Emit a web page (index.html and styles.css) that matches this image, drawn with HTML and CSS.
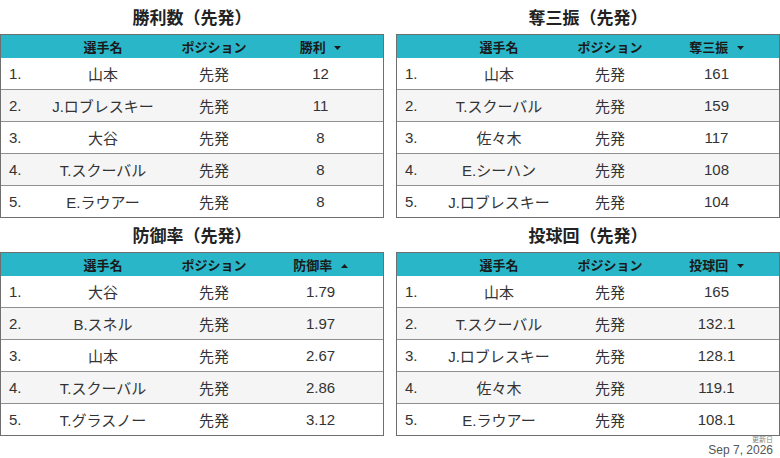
FILE: index.html
```html
<!DOCTYPE html>
<html lang="ja">
<head>
<meta charset="utf-8">
<link rel="stylesheet" href="styles.css">
</head>
<body>
<div class="page">
  <div class="grid">
    <section class="panel">
      <h2 class="title">勝利数（先発）</h2>
      <div class="tbl">
        <div class="row head"><span></span><span>選手名</span><span>ポジション</span><span>勝利 <svg class="sort" width="7" height="4" viewBox="0 0 7 4"><path d="M0 0h7L3.5 4z"/></svg></span></div>
        <div class="row"><span class="rank">1.</span><span>山本</span><span>先発</span><span>12</span></div>
        <div class="row alt"><span class="rank">2.</span><span>J.ロブレスキー</span><span>先発</span><span>11</span></div>
        <div class="row"><span class="rank">3.</span><span>大谷</span><span>先発</span><span>8</span></div>
        <div class="row alt"><span class="rank">4.</span><span>T.スクーバル</span><span>先発</span><span>8</span></div>
        <div class="row"><span class="rank">5.</span><span>E.ラウアー</span><span>先発</span><span>8</span></div>
      </div>
    </section>
    <section class="panel">
      <h2 class="title">奪三振（先発）</h2>
      <div class="tbl">
        <div class="row head"><span></span><span>選手名</span><span>ポジション</span><span>奪三振 <svg class="sort" width="7" height="4" viewBox="0 0 7 4"><path d="M0 0h7L3.5 4z"/></svg></span></div>
        <div class="row"><span class="rank">1.</span><span>山本</span><span>先発</span><span>161</span></div>
        <div class="row alt"><span class="rank">2.</span><span>T.スクーバル</span><span>先発</span><span>159</span></div>
        <div class="row"><span class="rank">3.</span><span>佐々木</span><span>先発</span><span>117</span></div>
        <div class="row alt"><span class="rank">4.</span><span>E.シーハン</span><span>先発</span><span>108</span></div>
        <div class="row"><span class="rank">5.</span><span>J.ロブレスキー</span><span>先発</span><span>104</span></div>
      </div>
    </section>
    <section class="panel">
      <h2 class="title">防御率（先発）</h2>
      <div class="tbl">
        <div class="row head"><span></span><span>選手名</span><span>ポジション</span><span>防御率 <svg class="sort" width="7" height="4" viewBox="0 0 7 4"><path d="M0 4h7L3.5 0z"/></svg></span></div>
        <div class="row"><span class="rank">1.</span><span>大谷</span><span>先発</span><span>1.79</span></div>
        <div class="row alt"><span class="rank">2.</span><span>B.スネル</span><span>先発</span><span>1.97</span></div>
        <div class="row"><span class="rank">3.</span><span>山本</span><span>先発</span><span>2.67</span></div>
        <div class="row alt"><span class="rank">4.</span><span>T.スクーバル</span><span>先発</span><span>2.86</span></div>
        <div class="row"><span class="rank">5.</span><span>T.グラスノー</span><span>先発</span><span>3.12</span></div>
      </div>
    </section>
    <section class="panel">
      <h2 class="title">投球回（先発）</h2>
      <div class="tbl">
        <div class="row head"><span></span><span>選手名</span><span>ポジション</span><span>投球回 <svg class="sort" width="7" height="4" viewBox="0 0 7 4"><path d="M0 0h7L3.5 4z"/></svg></span></div>
        <div class="row"><span class="rank">1.</span><span>山本</span><span>先発</span><span>165</span></div>
        <div class="row alt"><span class="rank">2.</span><span>T.スクーバル</span><span>先発</span><span>132.1</span></div>
        <div class="row"><span class="rank">3.</span><span>J.ロブレスキー</span><span>先発</span><span>128.1</span></div>
        <div class="row alt"><span class="rank">4.</span><span>佐々木</span><span>先発</span><span>119.1</span></div>
        <div class="row"><span class="rank">5.</span><span>E.ラウアー</span><span>先発</span><span>108.1</span></div>
      </div>
    </section>
  </div>
  <footer class="updated">
    <div class="updated-label">更新日</div>
    <div class="updated-date">Sep 7, 2026</div>
  </footer>
</div>
</body>
</html>
```
FILE: styles.css
```css
html, body {
  margin: 0;
  padding: 0;
  background: #ffffff;
}
body {
  font-family: "Liberation Sans", Arial, "Noto Sans CJK JP", sans-serif;
  color: #333333;
}
.page {
  width: 780px;
  height: 458px;
  overflow: hidden;
}
.grid {
  display: grid;
  grid-template-columns: 384px 384px;
  column-gap: 12px;
}
.panel {
  display: flex;
  flex-direction: column;
}
.title {
  margin: 0;
  height: 34px;
  line-height: 33px;
  text-align: center;
  font-size: 17px;
  font-weight: bold;
  color: #222222;
  font-family: "Noto Sans CJK JP", sans-serif;
}
.tbl {
  border: 1px solid #6f6f6f;
}
.row {
  display: grid;
  grid-template-columns: 35px 134px 88px 1fr;
  height: 31px;
  align-items: center;
  font-size: 15px;
  border-bottom: 1px solid #8f8f8f;
  background: #ffffff;
}
.row:last-child {
  border-bottom: none;
}
.row.alt {
  background: #f5f5f5;
}
.row > span {
  text-align: center;
  white-space: nowrap;
}
.row > span.rank {
  text-align: left;
  padding-left: 8px;
}
.row.head {
  height: 23px;
  background: #2ab6c9;
  font-size: 13px;
  font-weight: bold;
  color: #1a1a1a;
  border-bottom: none;
}
.sort {
  margin-left: 5px;
  vertical-align: middle;
  position: relative;
  top: -1px;
  fill: #1a1a1a;
}
.updated {
  text-align: right;
  padding-right: 7px;
  color: #555555;
}
.updated-label {
  font-size: 7px;
  line-height: 7px;
  height: 7px;
  color: #888888;
  font-family: "Noto Sans CJK JP", sans-serif;
}
.updated-date {
  font-size: 12px;
  line-height: 14px;
}
```
